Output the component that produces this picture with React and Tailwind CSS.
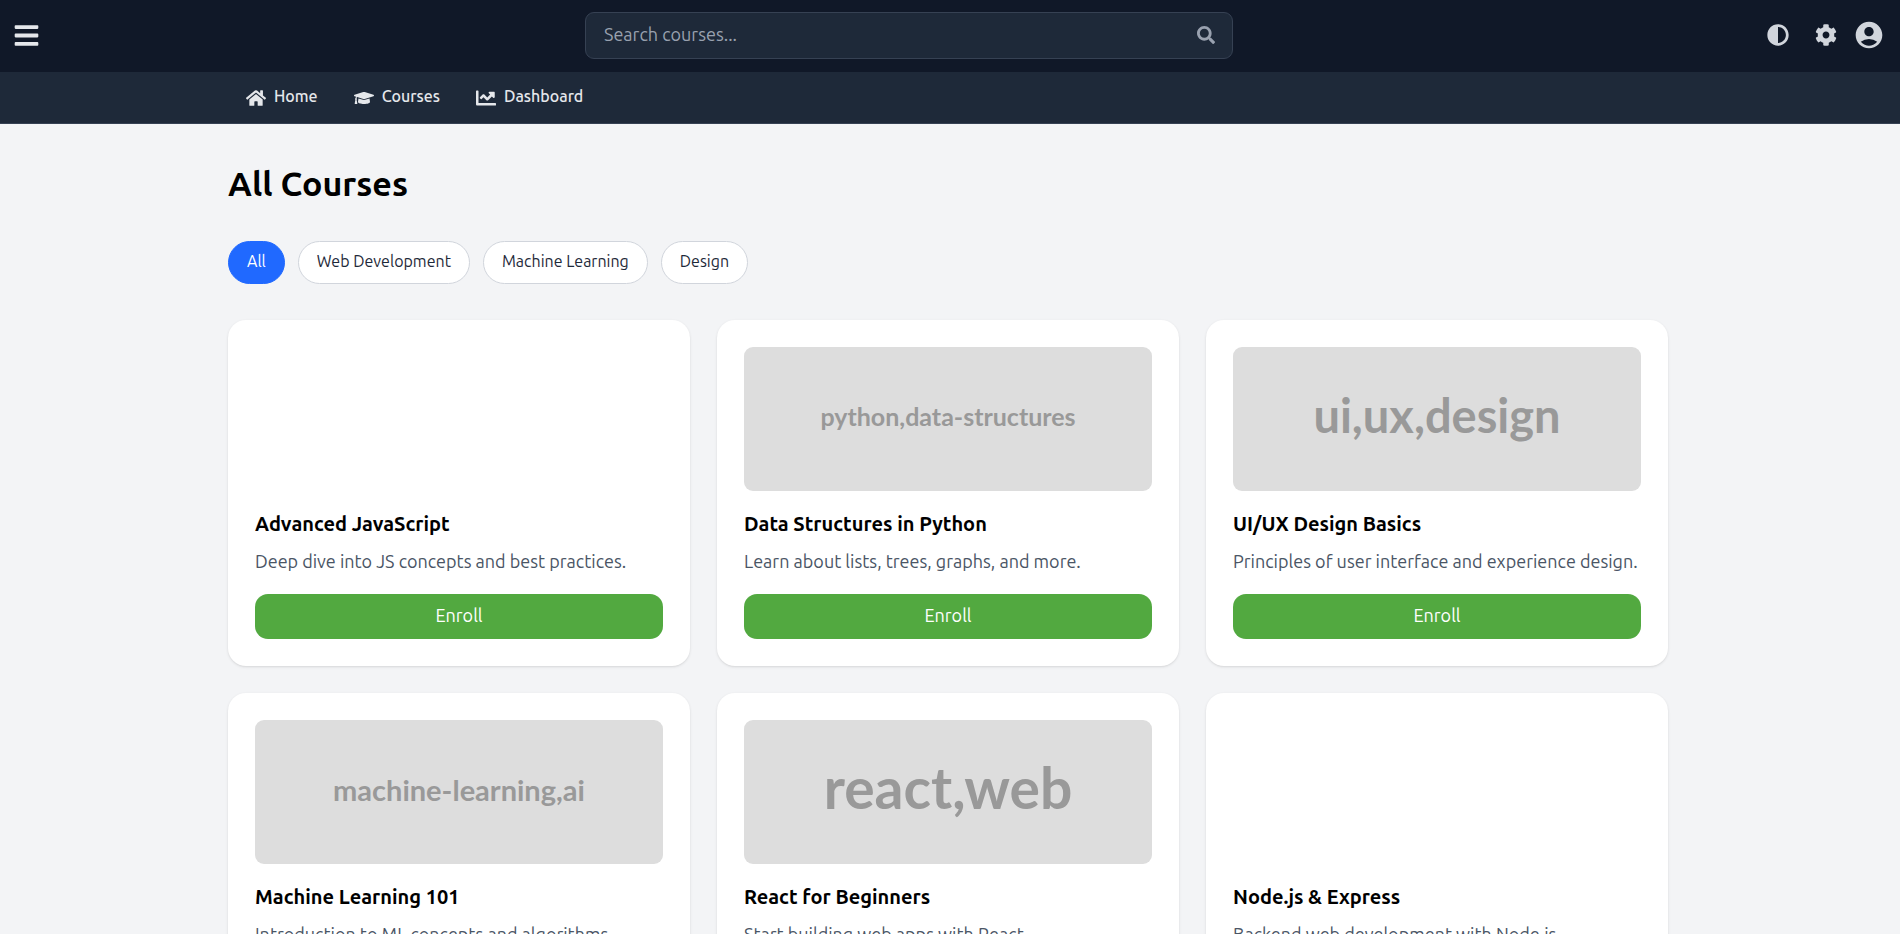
import { FaBars, FaSearch, FaHome, FaGraduationCap, FaChartLine, FaCog, FaAdjust } from "react-icons/fa";
import { MdAccountCircle } from "react-icons/md";

const navItems = [
  { label: "Home", Icon: FaHome },
  { label: "Courses", Icon: FaGraduationCap },
  { label: "Dashboard", Icon: FaChartLine },
];

const filters = ["All", "Web Development", "Machine Learning", "Design"];

const courses = [
  { title: "Advanced JavaScript", text: "Deep dive into JS concepts and best practices." },
  { title: "Data Structures in Python", text: "Learn about lists, trees, graphs, and more.", cover: "python,data-structures", size: "pb-1 text-[25px]" },
  { title: "UI/UX Design Basics", text: "Principles of user interface and experience design.", cover: "ui,ux,design", size: "pb-2 text-[47px]" },
  { title: "Machine Learning 101", text: "Introduction to ML concepts and algorithms.", cover: "machine-learning,ai", size: "pb-1 text-[29px]" },
  { title: "React for Beginners", text: "Start building web apps with React.", cover: "react,web", size: "pb-2 text-[57px]" },
  { title: "Node.js & Express", text: "Backend web development with Node.js." },
];

function CourseCard({ course }) {
  return (
    <article className="rounded-[18px] bg-white p-[27px] shadow-sm">
      {course.cover ? (
        <div
          className={`flex h-36 items-center justify-center rounded-[9px] bg-[#dddddd] font-[Lato,sans-serif] font-bold text-[#999999] ${course.size}`}
        >
          {course.cover}
        </div>
      ) : (
        <div className="h-36" />
      )}
      <h2 className="mt-[17px] text-[20px] leading-[32px] font-semibold text-black">{course.title}</h2>
      <p className="mt-2 text-[18px] leading-[27px] text-gray-600">{course.text}</p>
      <button type="button" className="mt-[19px] h-[45px] w-full rounded-[13px] bg-[#52a940] pb-[2px] text-[18px] text-white">
        Enroll
      </button>
    </article>
  );
}

export default function App() {
  return (
    <div className="min-h-screen bg-gray-100 font-[Ubuntu,'Noto_Sans',sans-serif]">
      <header className="flex h-[72px] items-center justify-between bg-gray-900 pr-[15px] pb-[2px] pl-[13px]">
        <button type="button" aria-label="Menu" className="w-[38px] text-gray-200">
          <FaBars size={27} />
        </button>
        <div className="flex h-[47px] w-[648px] items-center rounded-[9px] border border-gray-700 bg-gray-800 pr-[17px] pl-[18px]">
          <input
            type="text"
            aria-label="Search courses"
            placeholder="Search courses..."
            className="min-w-0 flex-1 bg-transparent pb-[2px] text-[18px] text-white outline-none placeholder:text-gray-400"
          />
          <button type="button" aria-label="Search" className="text-gray-400">
            <FaSearch size={18} />
          </button>
        </div>
        <div className="flex items-center text-gray-300">
          <button type="button" aria-label="Toggle theme" className="mr-[26px]">
            <FaAdjust size={22} />
          </button>
          <button type="button" aria-label="Settings" className="mr-4">
            <FaCog size={22} />
          </button>
          <button type="button" aria-label="Account">
            <MdAccountCircle size={32} />
          </button>
        </div>
      </header>
      <nav className="h-[52px] border-b border-gray-700 bg-gray-800 pr-1">
        <div className="mx-auto flex h-full max-w-[1440px] items-center gap-9 px-[18px]">
          {navItems.map(({ label, Icon }) => (
            <a key={label} href="#" className="flex items-center gap-2 text-[16px] font-medium text-gray-200">
              <Icon size={20} />
              <span className="pb-[3px]">{label}</span>
            </a>
          ))}
        </div>
      </nav>
      <main className="pr-1 pb-9">
        <div className="mx-auto max-w-[1440px] pt-[35px]">
          <h1 className="text-[34px] leading-[48px] font-semibold text-black">All Courses</h1>
          <div className="mt-[34px] flex gap-[13px]">
            {filters.map((name, i) => (
              <button
                key={name}
                type="button"
                className={
                  i === 0
                    ? "h-[43px] rounded-full border border-[#2069ff] bg-[#2069ff] px-[18px] pb-[3px] text-[16px] text-white"
                    : "h-[43px] rounded-full border border-gray-300 bg-white px-[18px] pb-[3px] text-[16px] text-gray-800"
                }
              >
                {name}
              </button>
            ))}
          </div>
          <div className="mt-9 grid grid-cols-3 gap-[27px]">
            {courses.map((course) => (
              <CourseCard key={course.title} course={course} />
            ))}
          </div>
        </div>
      </main>
    </div>
  );
}
